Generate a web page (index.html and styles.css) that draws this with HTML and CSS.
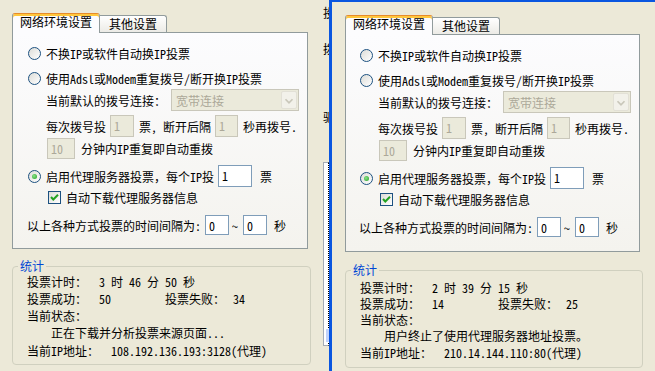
FILE: index.html
```html
<!DOCTYPE html>
<html>
  <head>
    <meta charset="utf-8" />
    <title>投票设置</title>
    <link rel="stylesheet" href="styles.css">
  </head>
  <body>
    <div class="screen">
      <div class="pane">
        <div class="tabs">
          <div class="tab tab-on">网络环境设置</div>
          <div class="tab">其他设置</div>
        </div>
        <div class="page">
          <div class="row opt"><span class="radio"></span>不换IP或软件自动换IP投票</div>
          <div class="row opt opt2"><span class="radio"></span>使用Adsl或Modem重复拨号/断开换IP投票</div>
          <div class="row sub combo-row">当前默认的拨号连接：
            <div class="combo"><span class="combo-text">宽带连接</span>
              <span class="combo-btn"><svg width="16" height="18" viewBox="0 0 16 18"><path d="M4 7 L8 11 L12 7" fill="none" stroke="#c9c7ba" stroke-width="2"/></svg></span>
            </div>
          </div>
          <div class="row sub dial-row">每次拨号投<span class="ed off w24">1</span>票, 断开后隔<span class="ed off w23">1</span>秒再拨号.</div>
          <div class="row sub ten-row"><span class="ed off w28">10</span>分钟内IP重复即自动重拨</div>
          <div class="row opt proxy-row"><span class="radio on"></span>启用代理服务器投票，每个IP投<span class="ed w34">1</span>票</div>
          <div class="row check-row"><span class="check"><svg width="11" height="11" viewBox="0 0 11 11"><path d="M2 5 L4.3 7.5 L9 2.8" fill="none" stroke="#21a121" stroke-width="2"/></svg></span>自动下载代理服务器信息</div>
          <div class="row gap-row">以上各种方式投票的时间间隔为:<span class="ed w24 g1">0</span>~<span class="ed w24 g2">0</span>秒</div>
        </div>
        <fieldset class="stats">
          <legend>统计</legend>
          <div class="stat"><span class="k">投票计时：</span><span class="v">3 时 46 分 50 秒</span></div>
          <div class="stat"><span class="k cell"><span>投票成功：</span><span class="v">50</span></span><span>投票失败：</span><span class="v2">34</span></div>
          <div class="stat">当前状态：</div>
          <div class="stat msg">正在下载并分析投票来源页面...</div>
          <div class="stat last"><span class="k">当前IP地址：</span><span class="v">108.192.136.193:3128(代理)</span></div>
        </fieldset>
      </div>

      <div class="strip">
        <div class="frag f1">投</div>
        <div class="frag f2">拨</div>
        <div class="frag f3">驱</div>
        <div class="listbox"><div class="thumb"></div></div>
      </div>

      <div class="pane pane-right">
        <div class="tabs">
          <div class="tab tab-on">网络环境设置</div>
          <div class="tab">其他设置</div>
        </div>
        <div class="page">
          <div class="row opt"><span class="radio"></span>不换IP或软件自动换IP投票</div>
          <div class="row opt opt2"><span class="radio"></span>使用Adsl或Modem重复拨号/断开换IP投票</div>
          <div class="row sub combo-row">当前默认的拨号连接：
            <div class="combo"><span class="combo-text">宽带连接</span>
              <span class="combo-btn"><svg width="16" height="18" viewBox="0 0 16 18"><path d="M4 7 L8 11 L12 7" fill="none" stroke="#c9c7ba" stroke-width="2"/></svg></span>
            </div>
          </div>
          <div class="row sub dial-row">每次拨号投<span class="ed off w24">1</span>票, 断开后隔<span class="ed off w23">1</span>秒再拨号.</div>
          <div class="row sub ten-row"><span class="ed off w28">10</span>分钟内IP重复即自动重拨</div>
          <div class="row opt proxy-row"><span class="radio on"></span>启用代理服务器投票，每个IP投<span class="ed w34">1</span>票</div>
          <div class="row check-row"><span class="check"><svg width="11" height="11" viewBox="0 0 11 11"><path d="M2 5 L4.3 7.5 L9 2.8" fill="none" stroke="#21a121" stroke-width="2"/></svg></span>自动下载代理服务器信息</div>
          <div class="row gap-row">以上各种方式投票的时间间隔为:<span class="ed w24 g1">0</span>~<span class="ed w24 g2">0</span>秒</div>
        </div>
        <fieldset class="stats">
          <legend>统计</legend>
          <div class="stat"><span class="k">投票计时：</span><span class="v">2 时 39 分 15 秒</span></div>
          <div class="stat"><span class="k cell"><span>投票成功：</span><span class="v">14</span></span><span>投票失败：</span><span class="v2">25</span></div>
          <div class="stat">当前状态：</div>
          <div class="stat msg">用户终止了使用代理服务器地址投票。</div>
          <div class="stat last"><span class="k">当前IP地址：</span><span class="v">210.14.144.110:80(代理)</span></div>
        </fieldset>
      </div>
    </div>
  </body>
</html>
```

FILE: styles.css
```css
* {
  box-sizing: border-box;
}

body {
  margin: 0;
  background: #ece9d8; /* XP button face */
  color: #000;
  font-family: "Noto Sans Mono CJK SC", "Noto Sans CJK SC", sans-serif;
  font-size: 12px;
}

.screen {
  display: flex;
  width: 655px;
  height: 371px;
  overflow: hidden;
}

.pane {
  width: 322px;
  flex: none;
  padding: 13px 0 0 12px;
}

.pane-right {
  width: 326px;
  border-top: 2px solid #0a56e0;
  border-left: 3px solid #0a56e0;
  padding-left: 13px;
}

/* tabs */
.tabs {
  display: flex;
  align-items: flex-end;
  height: 20px;
  margin-bottom: -1px;
  position: relative;
  z-index: 1;
}

.tab {
  width: 67px;
  height: 17px;
  margin-bottom: 1px;
  padding-top: 1px;
  border: 1px solid #919b9c;
  border-left: 0;
  border-bottom: 0;
  border-radius: 0 3px 0 0;
  background: linear-gradient(#ffffff, #ecebe6);
  line-height: 14px;
  text-align: center;
}

.tab-on {
  width: 88px;
  height: 20px;
  margin-bottom: 0;
  padding: 1px 0 0 7px;
  border-left: 1px solid #919b9c;
  border-top: 1px solid #e68b2c;
  border-radius: 3px 3px 0 0;
  background: #fcfcfe;
  box-shadow: inset 0 2px 0 #ffc73c;
  text-align: left;
}

.page {
  width: 296px;
  height: 217px;
  padding: 10px 0 0 15px;
  border: 1px solid #919b9c;
  background: linear-gradient(#fcfcfe, #f4f3ee);
}

.pane-right .page {
  width: 295px;
  height: 218px;
  padding-left: 14px;
}

/* rows inside the tab page */
.row {
  display: flex;
  align-items: center;
  white-space: nowrap;
}

.opt {
  height: 20px;
}

.opt2 {
  margin-top: 5px;
}

.sub {
  padding-left: 18px;
}

.combo-row {
  height: 22px;
  margin-top: 1px;
}

.dial-row {
  height: 22px;
  margin-top: 4px;
}

.ten-row {
  height: 21px;
  margin-top: 1px;
  padding-left: 19px;
}

.proxy-row {
  height: 22px;
  margin-top: 6px;
}

.check-row {
  height: 16px;
  margin-top: 2px;
  padding-left: 20px;
}

.gap-row {
  height: 20px;
  margin-top: 10px;
  margin-left: -1px;
}

.radio {
  position: relative;
  width: 13px;
  height: 13px;
  margin-right: 5px;
  border: 1px solid #1c5180;
  border-radius: 50%;
  background: linear-gradient(135deg, #dcdcd7, #ffffff);
  flex: none;
}

.radio.on::after {
  content: "";
  position: absolute;
  left: 3px;
  top: 3px;
  width: 5px;
  height: 5px;
  border-radius: 50%;
  background: radial-gradient(circle at 40% 40%, #8ae28a, #21a121);
}

.check {
  display: flex;
  align-items: center;
  justify-content: center;
  width: 13px;
  height: 13px;
  margin-right: 5px;
  border: 1px solid #1c5180;
  background: linear-gradient(135deg, #dcdcd7, #ffffff);
  flex: none;
}

.combo {
  display: flex;
  align-items: center;
  width: 128px;
  height: 22px;
  margin-left: 5px;
  padding: 0 1px 0 4px;
  border: 1px solid #c9c7ba;
  background: #ebeadb;
  color: #aca899;
}

.combo-text {
  flex: 1;
}

.combo-btn {
  display: flex;
  width: 16px;
  height: 18px;
  border: 1px solid #e2e0d6;
  border-radius: 2px;
  background: #f2f1ea;
}

/* edit boxes */
.ed {
  height: 22px;
  margin: 0 5px 0 4px;
  padding-left: 3px;
  border: 1px solid #7f9db9;
  background: #fff;
  line-height: 20px;
  flex: none;
}

.ed.off {
  border-color: #c9c7ba;
  background: #ebeadb;
  color: #aca899;
}

.ten-row .ed {
  height: 21px;
  margin: 0 6px 0 0;
}

.proxy-row .ed {
  margin-right: 8px;
}

.gap-row .ed {
  height: 20px;
}

.gap-row .g1 {
  margin-right: 3px;
}

.gap-row .g2 {
  margin: 0 7px 0 5px;
}

.w23 { width: 23px; }
.w24 { width: 24px; }
.w28 { width: 28px; }
.w34 { width: 34px; }

/* statistics group */
.stats {
  width: 299px;
  min-width: 0;
  margin: 10px 0 0;
  padding: 0 0 5px 5px;
  border: 1px solid #d0d0bf;
  border-radius: 4px;
}

.stats legend {
  padding: 0 2px;
  color: #0046d5;
  line-height: 14px;
}

.stat {
  display: flex;
  padding-left: 9px;
  line-height: 17px;
  white-space: pre;
}

.stat.last {
  margin-top: 1px;
}

.cell {
  display: flex;
  width: 138px;
}

.v {
  margin-left: 12px;
}

.v2 {
  margin-left: 8px;
}

.msg {
  padding-left: 33px;
}

.pane-right .stats {
  width: 298px;
  margin-top: 11px;
  padding-bottom: 6px;
}

.pane-right .stats .stat:first-of-type {
  margin-top: 3px;
}

.pane-right .stat {
  line-height: 16px;
}

/* sliver of the window behind */
.strip {
  display: flex;
  flex-direction: column;
  width: 7px;
  flex: none;
  padding-left: 1px;
  overflow: hidden;
}

.frag {
  width: 12px;
  height: 12px;
  line-height: 12px;
  flex: none;
}

.f1 { margin-top: 7px; }
.f2 { margin-top: 24px; }
.f3 { margin-top: 56px; }

.listbox {
  width: 6px;
  height: 184px;
  margin-top: 39px;
  border: 1px solid #a5acb5;
  border-right: 1px dotted #000;
  background: #fff;
  flex: none;
}

.thumb {
  width: 3px;
  height: 13px;
  margin: 166px 0 0 2px;
  background: #c1d3fb;
}
```
